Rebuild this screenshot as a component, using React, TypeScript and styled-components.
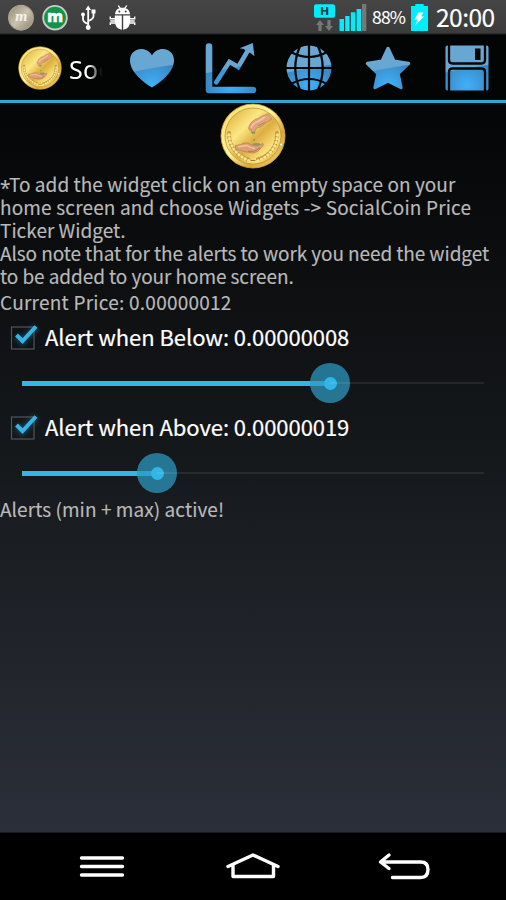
import React from 'react';
import styled, { createGlobalStyle } from 'styled-components';

const GlobalStyle = createGlobalStyle`
  * { box-sizing: border-box; }
  body { margin: 0; background: #000; }
  svg { display: block; flex: none; }
`;

const uiFont = "'Noto Sans CJK KR', 'Noto Sans', sans-serif";

const Screen = styled.div`
  display: flex;
  flex-direction: column;
  width: 506px;
  height: 900px;
  overflow: hidden;
  font-family: ${uiFont};
  color: #b9b9b9;
  background: #000;
`;

const StatusBar = styled.header`
  display: flex;
  align-items: flex-start;
  justify-content: space-between;
  height: 35px;
  padding: 0 9px 0 8px;
  background: linear-gradient(#454545, #3c3c3c 33px, #1c1c1c 34px, #080808);
  color: #fff;
`;

const StatusGroup = styled.div`
  display: flex;
  align-items: flex-start;
  height: 35px;
`;

const BatteryLevel = styled.span`
  width: 44px;
  padding-left: 5px;
  font-size: 17.5px;
  line-height: 34px;
  letter-spacing: -0.8px;
  -webkit-text-stroke: 0.1px #fff;
`;

const Clock = styled.span`
  width: 61px;
  margin-left: 8px;
  font-size: 24.5px;
  line-height: 34px;
  letter-spacing: -0.5px;
  white-space: nowrap;
  -webkit-text-stroke: 0.15px #fff;
`;

const ActionBar = styled.nav`
  display: flex;
  align-items: center;
  height: 68px;
  padding-left: 18px;
  border-bottom: 3px solid #2ba7d8;
  background: #030404;
`;

const AppTitle = styled.div`
  width: 33px;
  margin: 2px 11px 0 7px;
  overflow: hidden;
  color: #fff;
  font-family: 'Noto Sans', sans-serif;
  font-size: 25px;
  line-height: 40px;
  letter-spacing: 0.3px;
  white-space: nowrap;
  mask-image: linear-gradient(90deg, #000 20px, transparent 33px);
`;

const Actions = styled.div`
  flex: 1;
  display: grid;
  grid-template-columns: repeat(5, 1fr);
  justify-items: center;
`;

const ActionButton = styled.button`
  display: block;
  padding: 0;
  border: 0;
  background: none;
`;

const Content = styled.main`
  display: flex;
  flex-direction: column;
  height: 730px;
  background: linear-gradient(#040506, #16191c 50%, #2b2f39);
  border-bottom: 1px solid #1a1c21;
`;

const CoinHolder = styled.div`
  display: flex;
  justify-content: center;
  height: 69px;
`;

const Paragraph = styled.div`
  display: flex;
  flex-direction: column;
`;

const TextLine = styled.span<{ $tracking?: number; $height?: number }>`
  height: ${(p) => p.$height ?? 23}px;
  font-size: 19px;
  line-height: ${(p) => p.$height ?? 23}px;
  letter-spacing: ${(p) => p.$tracking ?? 0}px;
  white-space: nowrap;
  -webkit-text-stroke: 0.15px currentColor;
`;

const Asterisk = styled.span`
  display: inline-block;
  width: 9px;
  font-family: 'Noto Sans', sans-serif;
  font-size: 19px;
  line-height: 0;
  vertical-align: -3px;
`;

const CheckRow = styled.label`
  display: flex;
  align-items: center;
  gap: 3px;
  height: 44px;
  padding-left: 6px;
`;

const CheckLabel = styled.span`
  padding-bottom: 4px;
  color: #fff;
  font-size: 22px;
  line-height: 30px;
  letter-spacing: -0.06px;
  white-space: nowrap;
  -webkit-text-stroke: 0.2px #fff;
`;

const SliderRow = styled.div`
  display: flex;
  align-items: center;
  height: 46px;
  padding: 0 22px;
`;

const Filled = styled.div<{ $width: number }>`
  width: ${(p) => p.$width}px;
  height: 5px;
  background: #33b5e5;
`;

const Thumb = styled.div`
  display: grid;
  place-items: center;
  flex: none;
  width: 40px;
  height: 40px;
  margin: 0 -20px;
  border-radius: 50%;
  background: rgba(45, 155, 195, 0.72);

  &::after {
    content: '';
    width: 13px;
    height: 13px;
    border-radius: 50%;
    background: #33b5e5;
  }
`;

const Remaining = styled.div`
  flex: 1;
  height: 2px;
  background: rgba(255, 255, 255, 0.08);
`;

const NavBar = styled.footer`
  display: flex;
  justify-content: center;
  gap: 91px;
  height: 67px;
  background: #000;
`;

function Coin({ size, id }: { size: number; id: string }) {
  return (
    <svg width={size} height={size} viewBox="0 0 66 66">
      <defs>
        <linearGradient id={`${id}-rim`} x1="0" y1="0" x2="1" y2="1">
          <stop offset="0" stopColor="#f5d968" />
          <stop offset=".45" stopColor="#fff4a4" />
          <stop offset=".7" stopColor="#d9a835" />
          <stop offset="1" stopColor="#f6dc79" />
        </linearGradient>
        <linearGradient id={`${id}-face`} x1="0" y1="0" x2="1" y2="1">
          <stop offset="0" stopColor="#d8a72e" />
          <stop offset=".35" stopColor="#fbe784" />
          <stop offset=".55" stopColor="#dcae40" />
          <stop offset=".75" stopColor="#f8e07a" />
          <stop offset="1" stopColor="#d3a02f" />
        </linearGradient>
      </defs>
      <circle cx="33" cy="33" r="32" fill={`url(#${id}-rim)`} stroke="#d8ad3f" strokeWidth=".8" />
      <circle cx="33" cy="33" r="28" fill={`url(#${id}-face)`} stroke="#c4952c" strokeWidth=".8" />
      <g fill="none" strokeLinecap="round">
        <path d="M9 30Q9 50 30 57M57 30Q57 51 36 57" stroke="#c39a3a" strokeWidth="3.8" strokeDasharray="1 2.8" />
        <path d="M9 31.500Q10 50 30 58M57.500 31.500Q56 51 37 58" stroke="#f9e799" strokeWidth="2.600" strokeDasharray=".8 3" />
        <path d="M31 57.500h4" stroke="#a97b23" strokeWidth="1" />
      </g>
      <path d="M28.500 25Q30 19 35 16.500Q39 15.500 42 13L48.500 10.500 52 16 45 20.500Q41 24.500 36.500 25L34.500 29Q32.500 30.500 31 29.500L31.500 27Q29 28.500 28.500 25z" fill="#e0a47a" stroke="#b87a50" strokeWidth=".6" />
      <path d="M31 24.500Q33 20 38 18.500L45 14" fill="none" stroke="#f0c6a6" strokeWidth="1.600" />
      <path d="M38 22.500Q42 21.500 45 19" fill="none" stroke="#c18055" strokeWidth="1" />
      <path d="M15.500 42.500Q21 42 24 40 28 39 32 42 38 43.500 43 40.500 44.500 41.500 41 45 38 49.500 33 50 26 49.500 15.500 46z" fill="#dc9f75" stroke="#b07448" strokeWidth=".6" />
      <path d="M18 43.800Q24 43 27 42.500 31 45 35 45.500" fill="none" stroke="#f0c6a6" strokeWidth="1.400" />
      <path d="M28 48.500Q35 49.500 40 45" fill="none" stroke="#b97a50" strokeWidth="1" />
      <g fill="#8c9569">
        <ellipse cx="33.500" cy="29.800" rx="1.800" ry="1.200" />
        <circle cx="34" cy="37" r="1" />
        <ellipse cx="36.500" cy="41.300" rx="3.800" ry="1.400" />
      </g>
      <circle cx="61" cy="41.500" r="1.100" fill="#fff" />
    </svg>
  );
}

function Glossy({ id, label, children }: { id: string; label: string; children: React.ReactNode }) {
  return (
    <ActionButton aria-label={label}>
      <svg width="56" height="56" viewBox="0 0 56 56">
        <defs>
          <radialGradient id={`${id}-glow`} gradientUnits="userSpaceOnUse" cx="28" cy="45" r="27">
            <stop offset="0" stopColor="#40b0fa" />
            <stop offset="1" stopColor="#3a84bd" />
          </radialGradient>
          <mask id={`${id}-shape`} maskUnits="userSpaceOnUse" x="0" y="0" width="56" height="56">
            {children}
          </mask>
        </defs>
        <g mask={`url(#${id}-shape)`}>
          <rect width="56" height="56" fill={`url(#${id}-glow)`} />
          <path d="M0 0H56V24Q30 27 0 34z" fill="#68a7d2" />
        </g>
      </svg>
    </ActionButton>
  );
}

function CheckMark() {
  return (
    <svg width="36" height="36" viewBox="0 0 36 36">
      <rect x="5.500" y="7" width="22.500" height="22" fill="none" stroke="#515559" strokeWidth="1.200" />
      <path d="M10.500 16 16.500 21.500 30 7" fill="none" stroke="#1583b0" strokeWidth="8" opacity=".35" filter="blur(2px)" />
      <path d="M10.500 15 16.500 21 30 6.500" fill="none" stroke="#33b5e5" strokeWidth="4" />
    </svg>
  );
}

function NotificationIcons() {
  return (
    <svg width="130" height="35" viewBox="8 0 130 35">
      <defs>
        <linearGradient id="silver" x1="0" y1="0" x2="1" y2="1">
          <stop offset="0" stopColor="#8f8775" />
          <stop offset=".5" stopColor="#c9c2ae" />
          <stop offset="1" stopColor="#8b826f" />
        </linearGradient>
      </defs>
      <circle cx="21" cy="17.700" r="12.300" fill="url(#silver)" stroke="#aaa390" strokeWidth="1.300" />
      <text x="21" y="21" textAnchor="middle" fill="#f4f1e8" fontFamily="DejaVu Serif" fontStyle="italic" fontWeight="700" fontSize="12">m</text>
      <circle cx="55" cy="17.700" r="11.800" fill="#139348" stroke="#c8cbc9" strokeWidth="1.900" />
      <text x="55" y="21.500" textAnchor="middle" fill="#fff" stroke="#fff" strokeWidth=".6" fontFamily="DejaVu Sans" fontWeight="700" fontSize="15.500">m</text>
      <path d="M88.200 9V27M88.200 24Q83 22 83 19V15M88.200 21Q93.500 19 93.500 16V12" fill="none" stroke="#fff" strokeWidth="1.800" />
      <g fill="#fff">
        <path d="M88.200 5.500 91 10H85.400z" />
        <circle cx="88.200" cy="27.500" r="2.400" />
        <circle cx="83" cy="14.500" r="1.900" />
        <rect x="91.500" y="9.500" width="4" height="4" />
        <path d="M115 14.300Q115.500 9.200 119.400 8.200L117.600 5.800 118.700 5.200 120.700 7.800H124.300L126.300 5.200 127.400 5.800 125.600 8.200Q129.500 9.200 130 14.300z" />
        <path d="M114.800 15.600H121.800V29.800Q114.800 28.500 114.800 21zM123.200 15.600H130.200V21Q130.200 28.500 123.200 29.800z" />
      </g>
      <path d="M110.300 16.500V18.800H115M110.300 21H115M110.300 25V23H115M134.700 16.500V18.800H130M134.700 21H130M134.700 25V23H130" fill="none" stroke="#fff" strokeWidth="1.400" />
      <circle cx="119.300" cy="11.500" r="1" fill="#444" />
      <circle cx="125.700" cy="11.500" r="1" fill="#444" />
    </svg>
  );
}

function NetworkIcons() {
  return (
    <svg width="54" height="35" viewBox="313 0 54 35">
      <rect x="314" y="4.300" width="21" height="13.400" rx="2" fill="#00eefc" />
      <text x="324.500" y="15" textAnchor="middle" fill="#153c42" fontFamily="DejaVu Sans" fontSize="11" fontWeight="700">H</text>
      <path d="M320 20 324 25H321.600V31H318.400V25H316zM329 31 333 26H330.600V20H327.400V26H325z" fill="#777" />
      <path d="M339.500 19H344V31H339.500zM345.200 16H349.500V31H345.200zM350.900 12.300H355.200V31H350.900zM356.600 9H361V31H356.600z" fill="#00eefc" />
      <rect x="362" y="4" width="4.300" height="27" fill="#777" />
    </svg>
  );
}

function BatteryIcon() {
  return (
    <svg width="17" height="35" viewBox="0 0 17 35">
      <path d="M4.300 4H12.700V6H17V31H0V6H4.300z" fill="#00eefc" />
      <path d="M7.300 12.500H12.500L9.800 16.500H13L4.200 25.500 6.800 19.500H3.500z" fill="#fff" />
    </svg>
  );
}

function NavIcon({ d }: { d: string }) {
  return (
    <ActionButton>
      <svg width="60" height="67" viewBox="0 0 60 67" fill="none" stroke="#fff" strokeWidth="3.400" strokeLinecap="round" strokeLinejoin="round">
        <path d={d} />
      </svg>
    </ActionButton>
  );
}

function Alert({ label, value }: { label: string; value: number }) {
  return (
    <>
      <CheckRow>
        <CheckMark />
        <CheckLabel>{label}</CheckLabel>
      </CheckRow>
      <SliderRow>
        <Filled $width={value} />
        <Thumb />
        <Remaining />
      </SliderRow>
    </>
  );
}

export default function App() {
  return (
    <Screen>
      <GlobalStyle />
      <StatusBar>
        <StatusGroup>
          <NotificationIcons />
        </StatusGroup>
        <StatusGroup>
          <NetworkIcons />
          <BatteryLevel>88%</BatteryLevel>
          <BatteryIcon />
          <Clock>20:00</Clock>
        </StatusGroup>
      </StatusBar>

      <ActionBar>
        <Coin size={44} id="small" />
        <AppTitle>Soc</AppTitle>
        <Actions>
          <Glossy id="heart" label="Favourite">
            <path fill="#fff" d="M28 47.500C20 43 6 32 6 20.500 6 13 11.500 9 17 9 22 9 26 11.500 28 15.500 30 11.500 34 9 39 9 44.500 9 50 13 50 20.500 50 32 36 43 28 47.500z" />
          </Glossy>
          <Glossy id="chart" label="Chart">
            <g fill="none" stroke="#fff">
              <path d="M6 6.500V50H50" strokeWidth="6.600" strokeLinecap="round" strokeLinejoin="round" />
              <path d="M13.200 42.300 26.500 21.800 35.200 27 45.500 9.500" strokeWidth="4.600" strokeLinecap="round" />
            </g>
            <path fill="#fff" d="M49.800 3 36.500 8.300Q41 8.500 44 11.200 48 12.500 51.500 16.300z" />
          </Glossy>
          <Glossy id="globe" label="Web">
            <circle cx="28" cy="28" r="22.500" fill="#fff" />
            <g fill="none" stroke="#000" strokeWidth="2.200">
              <path d="M28 4V52M4 28H52" />
              <path d="M20 4Q8.500 28 20 52M36 4Q47.500 28 36 52" />
              <path d="M9 11.500Q28 22.500 47 11.500M9 44.500Q28 33.500 47 44.500" />
            </g>
          </Glossy>
          <Glossy id="star" label="Rate">
            <path fill="#fff" stroke="#fff" strokeWidth="3.400" strokeLinejoin="round" d="M28 8.500 34 21.300 48.500 23.500 38 33.600 41 47.500 28 41 15 47.500 18 33.600 7.500 23.500 22 21.300z" />
          </Glossy>
          <Glossy id="save" label="Save">
            <rect x="6.500" y="5.500" width="43" height="45" rx="2" fill="#fff" />
            <g fill="none" stroke="#000" strokeWidth="2.300">
              <path d="M10 4V20Q10 23.500 13.500 23.500H42.500Q46 23.500 46 20V4" />
              <path d="M10 52V32Q10 28.500 13.500 28.500H42.500Q46 28.500 46 32V52" />
            </g>
            <rect x="36" y="8.500" width="5.500" height="11.500" fill="#000" />
          </Glossy>
        </Actions>
      </ActionBar>

      <Content>
        <CoinHolder>
          <Coin size={66} id="large" />
        </CoinHolder>
        <Paragraph>
          <TextLine $tracking={0.04}><Asterisk>*</Asterisk>To add the widget click on an empty space on your</TextLine>
          <TextLine $tracking={0.16}>home screen and choose Widgets -&gt; SocialCoin Price</TextLine>
          <TextLine>Ticker Widget.</TextLine>
          <TextLine $tracking={-0.09}>Also note that for the alerts to work you need the widget</TextLine>
          <TextLine $tracking={-0.08}>to be added to your home screen.</TextLine>
        </Paragraph>
        <TextLine $height={29} $tracking={0.24}>Current Price: 0.00000012</TextLine>
        <Alert label="Alert when Below: 0.00000008" value={308} />
        <Alert label="Alert when Above: 0.00000019" value={135} />
        <TextLine $height={25} $tracking={0.07}>Alerts (min + max) active!</TextLine>
      </Content>

      <NavBar>
        <NavIcon d="M9.500 25H50.500M9.500 33.500H50.500M9.500 42H50.500" />
        <NavIcon d="M5 33.500 30 22 55 33.500M10 32V43.500H50.500V32" />
        <NavIcon d="M15 22 6.500 29H46.500Q54 29 54 36.500 54 44.500 46.500 44.500H18.500M6.500 29 15 35.500" />
      </NavBar>
    </Screen>
  );
}
